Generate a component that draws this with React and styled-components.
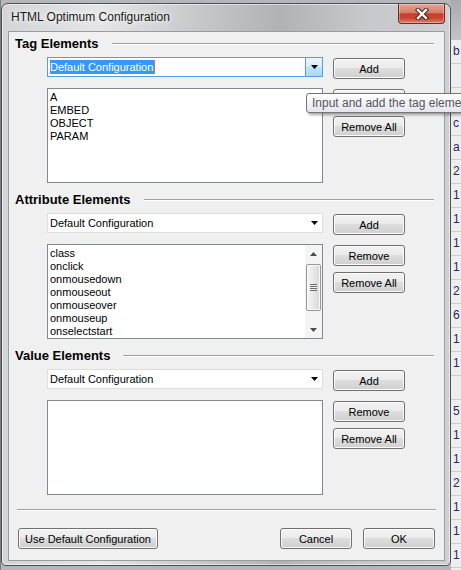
import React from "react";
import styled, { createGlobalStyle } from "styled-components";

const GlobalStyle = createGlobalStyle`
  html, body {
    margin: 0;
    padding: 0;
    overflow: hidden;
    background: #b4b6b9;
  }
  body {
    font-family: "Liberation Sans", Arial, sans-serif;
    font-size: 11px;
  }
`;

const Desktop = styled.div`
  position: relative;
  width: 461px;
  height: 570px;
  display: flex;
  overflow: hidden;
  background: #b4b6b9;
`;

const LeftEdge = styled.div`
  width: 1px;
  background: #7b7e82;
`;

const Window = styled.div`
  box-sizing: border-box;
  width: 450px;
  height: 563px;
  margin-top: 3px;
  border: 1px solid #4c4f53;
  border-radius: 7px 7px 5px 5px;
  padding: 0 5px 4px 6px;
  display: flex;
  flex-direction: column;
  background: linear-gradient(
    90deg,
    #d3d4d6 0%,
    #e4e5e6 22%,
    #c9cacc 42%,
    #b1b2b4 62%,
    #c6c7c9 80%,
    #cfd0d3 100%
  );
  box-shadow: inset 0 0 0 1px rgba(255, 255, 255, 0.55);
`;

const TitleBar = styled.div`
  height: 27px;
  display: flex;
  justify-content: space-between;
  align-items: flex-start;
`;

const TitleText = styled.div`
  padding: 6px 0 0 3px;
  font-size: 12px;
  line-height: 14px;
  color: #1b1b1b;
  text-shadow: 0 0 6px rgba(255, 255, 255, 0.95), 0 0 10px rgba(255, 255, 255, 0.8);
`;

const CloseButton = styled.div`
  box-sizing: border-box;
  width: 47px;
  height: 20px;
  border: 1px solid #6a2a22;
  border-top: none;
  border-radius: 0 0 4px 4px;
  display: flex;
  align-items: center;
  justify-content: center;
  background: linear-gradient(
    to bottom,
    #e6a897 0%,
    #d87b69 45%,
    #c5402c 52%,
    #c94632 75%,
    #e0806a 100%
  );
  box-shadow: inset 0 0 0 1px rgba(255, 240, 235, 0.35);
`;

const Client = styled.div`
  flex: 1;
  display: flex;
  flex-direction: column;
  padding-top: 4px;
  border: 1px solid #989ca1;
  background: #f0f0f0;
`;

const Section = styled.div`
  display: flex;
  flex-direction: column;
  margin-bottom: ${(p) => (p.$last ? "0" : "9px")};
`;

const SectionHead = styled.div`
  height: 16px;
  display: flex;
  align-items: center;
  gap: 13px;
  padding: 0 10px 0 6px;
`;

const SectionTitle = styled.div`
  font-weight: bold;
  font-size: 13px;
  line-height: 16px;
  color: #000;
`;

const Etched = styled.div`
  flex: 1;
  border-top: 1px solid #a0a0a0;
  border-bottom: 1px solid #ffffff;
`;

const SectionBody = styled.div`
  margin-top: 5px;
  padding-left: 38px;
  display: grid;
  grid-template-columns: 276px 72px;
  grid-template-rows: 20px 95px;
  column-gap: 10px;
  row-gap: 11px;
`;

const Combo = styled.div`
  box-sizing: border-box;
  height: 20px;
  display: flex;
  align-items: stretch;
  background: #fff;
  border: 1px solid ${(p) => (p.$focused ? "#569de5" : "#dedede")};
`;

const ComboText = styled.div`
  flex: 1;
  padding-left: 2px;
  display: flex;
  align-items: center;
  color: #000;
`;

const Selected = styled.span`
  background: #3399ff;
  color: #fff;
  line-height: 14px;
  padding-right: 1px;
  border-right: 1px solid #e07a2a;
`;

const DropButton = styled.div`
  width: 16px;
  display: flex;
  align-items: center;
  justify-content: center;
  ${(p) =>
    p.$focused &&
    `
    border-left: 1px solid #569de5;
    background: linear-gradient(to bottom, #eaf6fd 0%, #d9f0fc 45%, #bee6fd 50%, #a7d9f5 100%);
  `}
`;

const ListBox = styled.div`
  box-sizing: border-box;
  height: 95px;
  display: flex;
  border: 1px solid #828790;
  background: #fff;
`;

const Items = styled.div`
  flex: 1;
  padding: 2px 2px 0;
  overflow: hidden;
`;

const Item = styled.div`
  line-height: 13px;
  height: 13px;
  color: #000;
  white-space: nowrap;
`;

const ScrollBar = styled.div`
  width: 17px;
  display: flex;
  flex-direction: column;
  background: #f4f4f4;
`;

const ScrollArrow = styled.div`
  height: 17px;
  display: flex;
  align-items: center;
  justify-content: center;
`;

const Track = styled.div`
  flex: 1;
  padding: 2px 1px 0;
`;

const Thumb = styled.div`
  box-sizing: border-box;
  height: 47px;
  border: 1px solid #979797;
  border-radius: 2px;
  background: linear-gradient(to right, #f4f4f4 0%, #e8e8e8 50%, #d6d6d6 100%);
  box-shadow: inset 0 0 0 1px #fafafa;
  display: flex;
  align-items: center;
  justify-content: center;
`;

const Grip = styled.div`
  width: 7px;
  height: 7px;
  background: repeating-linear-gradient(
    to bottom,
    #6a6a6a 0px,
    #6a6a6a 1px,
    #f0f0f0 1px,
    #f0f0f0 2px
  );
`;

const ButtonStack = styled.div`
  margin-top: 1px;
  display: flex;
  flex-direction: column;
  gap: 6px;
`;

const Button = styled.button`
  box-sizing: border-box;
  width: ${(p) => p.$width || 72}px;
  height: 21px;
  margin-top: ${(p) => p.$offset || 0}px;
  padding: 0;
  border: 1px solid #707070;
  border-radius: 3px;
  font-family: "Liberation Sans", Arial, sans-serif;
  font-size: 11px;
  color: #000;
  background: linear-gradient(
    to bottom,
    #f2f2f2 0%,
    #ebebeb 45%,
    #dddddd 50%,
    #cfcfcf 100%
  );
  box-shadow: inset 0 0 0 1px #fbfbfb;
`;

const Separator = styled.div`
  margin: 14px 8px 0;
  border-top: 1px solid #a0a0a0;
  border-bottom: 1px solid #ffffff;
`;

const Footer = styled.div`
  margin-top: 17px;
  padding: 0 9px;
  display: flex;
  gap: 11px;
`;

const Spacer = styled.div`
  flex: 1;
`;

const Tooltip = styled.div`
  position: absolute;
  left: 306px;
  top: 93px;
  box-sizing: border-box;
  height: 20px;
  padding: 0 8px 0 5px;
  white-space: nowrap;
  font-size: 12px;
  line-height: 18px;
  color: #575757;
  border: 1px solid #767676;
  border-radius: 3px;
  background: linear-gradient(to bottom, #ffffff 0%, #e4e5f0 100%);
  box-shadow: 2px 2px 3px rgba(0, 0, 0, 0.35);
`;

const BackApp = styled.div`
  flex: 1;
  display: flex;
  flex-direction: column;
  background: #eeeeee;
`;

const BackHead = styled.div`
  height: 40px;
  background: linear-gradient(to bottom, #a9abae 0%, #c3c4c6 100%);
`;

const BackRow = styled.div`
  box-sizing: border-box;
  height: 24px;
  padding-left: 2px;
  border-bottom: 1px solid #cdcdcd;
  font-size: 12px;
  line-height: 23px;
  color: #2c2465;
`;

function Arrow({ up, color = "#000" }) {
  return (
    <svg width="7" height="4" viewBox="0 0 7 4">
      <path d={up ? "M0 4 L3.5 0 L7 4 Z" : "M0 0 L7 0 L3.5 4 Z"} fill={color} />
    </svg>
  );
}

function CloseGlyph() {
  return (
    <svg width="14" height="12" viewBox="0 0 14 12">
      <path d="M3 2 L11 10 M11 2 L3 10" stroke="#3b2522" strokeWidth="4.4" strokeLinecap="square" />
      <path d="M3 2 L11 10 M11 2 L3 10" stroke="#ffffff" strokeWidth="2.4" strokeLinecap="square" />
    </svg>
  );
}

function ComboBox({ focused }) {
  return (
    <Combo $focused={focused}>
      <ComboText>
        {focused ? <Selected>Default Configuration</Selected> : "Default Configuration"}
      </ComboText>
      <DropButton $focused={focused}>
        <Arrow />
      </DropButton>
    </Combo>
  );
}

function ElementSection({ title, focused, items, scroll, last }) {
  return (
    <Section $last={last}>
      <SectionHead>
        <SectionTitle>{title}</SectionTitle>
        <Etched />
      </SectionHead>
      <SectionBody>
        <ComboBox focused={focused} />
        <Button $offset={1}>Add</Button>
        <ListBox>
          <Items>
            {items.map((it) => (
              <Item key={it}>{it}</Item>
            ))}
          </Items>
          {scroll && (
            <ScrollBar>
              <ScrollArrow>
                <Arrow up color="#4a4a4a" />
              </ScrollArrow>
              <Track>
                <Thumb>
                  <Grip />
                </Thumb>
              </Track>
              <ScrollArrow>
                <Arrow color="#4a4a4a" />
              </ScrollArrow>
            </ScrollBar>
          )}
        </ListBox>
        <ButtonStack>
          <Button>Remove</Button>
          <Button>Remove All</Button>
        </ButtonStack>
      </SectionBody>
    </Section>
  );
}

const backRows = ["b", "", "", "c", "a", "2", "1", "1", "1", "1", "2", "6", "1", "1", "", "5", "1", "1", "2", "1", "1", "1"];

export default function App() {
  return (
    <>
      <GlobalStyle />
      <Desktop>
        <LeftEdge />
        <Window>
          <TitleBar>
            <TitleText>HTML Optimum Configuration</TitleText>
            <CloseButton>
              <CloseGlyph />
            </CloseButton>
          </TitleBar>
          <Client>
            <ElementSection title="Tag Elements" focused items={["A", "EMBED", "OBJECT", "PARAM"]} />
            <ElementSection
              title="Attribute Elements"
              scroll
              items={["class", "onclick", "onmousedown", "onmouseout", "onmouseover", "onmouseup", "onselectstart"]}
            />
            <ElementSection title="Value Elements" items={[]} last />
            <Separator />
            <Footer>
              <Button $width={140}>Use Default Configuration</Button>
              <Spacer />
              <Button>Cancel</Button>
              <Button>OK</Button>
            </Footer>
          </Client>
        </Window>
        <BackApp>
          <BackHead />
          {backRows.map((r, i) => (
            <BackRow key={i}>{r}</BackRow>
          ))}
        </BackApp>
        <Tooltip>Input and add the tag elements</Tooltip>
      </Desktop>
    </>
  );
}
